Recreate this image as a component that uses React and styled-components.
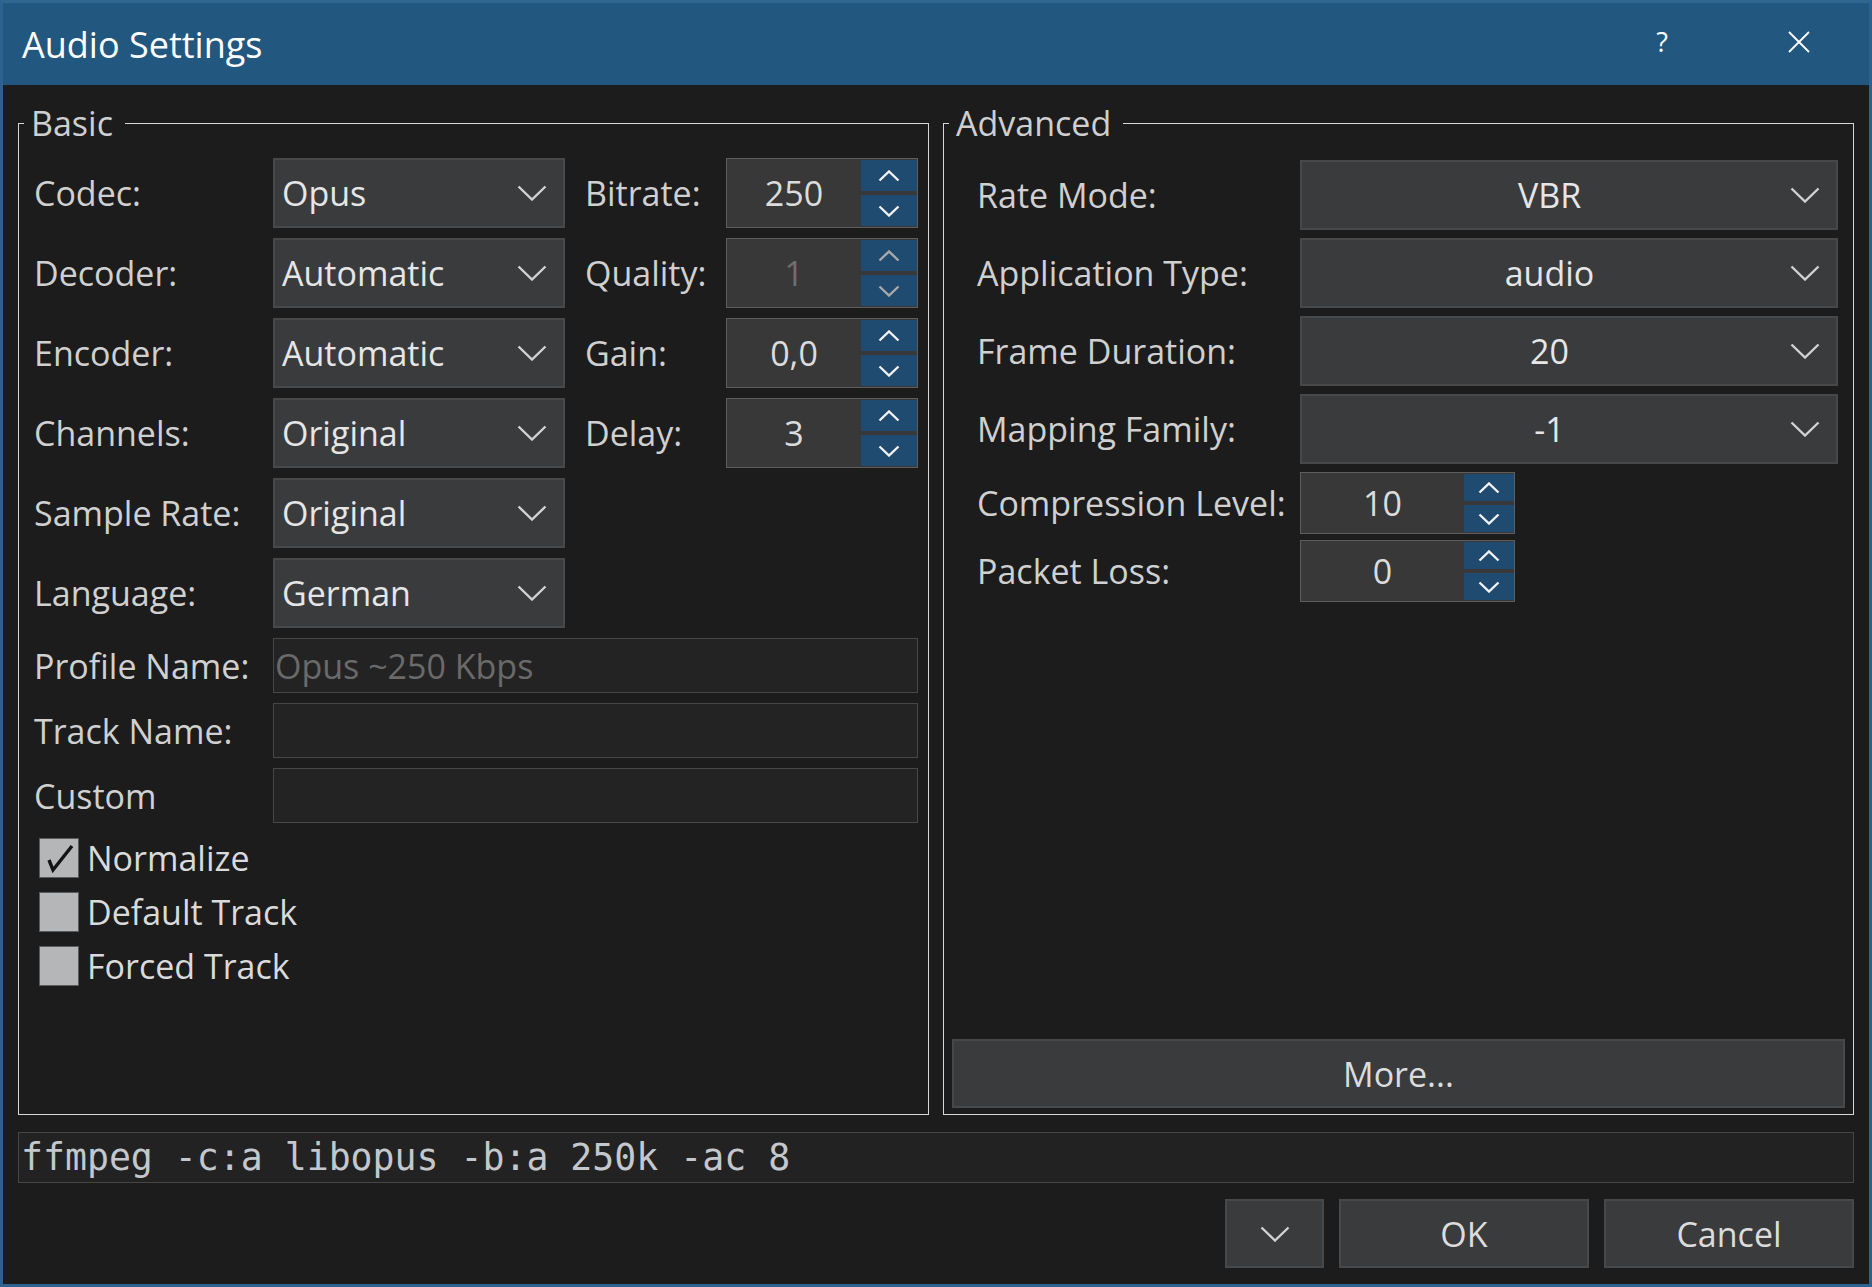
import React from "react";
import styled, { createGlobalStyle } from "styled-components";

const GlobalStyle = createGlobalStyle`
  html, body {
    margin: 0;
    padding: 0;
    background: #1c1c1c;
  }
  * {
    box-sizing: border-box;
  }
`;

const Chevron = ({ up, w = 30, h = 16, color = "#d2d2d2", sw = 2.4 }) => (
  <svg width={w} height={h} viewBox={`0 0 ${w} ${h}`}>
    <polyline
      points={
        up
          ? `1.5,${h - 1.5} ${w / 2},1.5 ${w - 1.5},${h - 1.5}`
          : `1.5,1.5 ${w / 2},${h - 1.5} ${w - 1.5},1.5`
      }
      fill="none"
      stroke={color}
      strokeWidth={sw}
    />
  </svg>
);

const Spin = ({ value, width, height, btnWidth, disabled }) => (
  <SpinBox $width={width} $height={height}>
    <SpinValue $disabled={disabled}>{value}</SpinValue>
    <SpinButtons $width={btnWidth}>
      <SpinButton>
        <Chevron up w={22} h={12} sw={2.4} color={disabled ? "#a9a9a9" : "#f2f2f2"} />
      </SpinButton>
      <SpinButton>
        <Chevron w={22} h={12} sw={2.4} color={disabled ? "#a9a9a9" : "#f2f2f2"} />
      </SpinButton>
    </SpinButtons>
  </SpinBox>
);

const Combo = ({ value, centered }) => (
  <ComboBox>
    <ComboValue $centered={centered}>{value}</ComboValue>
    <Chevron />
  </ComboBox>
);

const Check = ({ checked, label }) => (
  <CheckRow>
    <CheckBox>
      {checked && (
        <svg width="38" height="38" viewBox="0 0 38 38">
          <path d="M9 21 L13 31 L32 7" fill="none" stroke="#141414" strokeWidth="3.4" />
        </svg>
      )}
    </CheckBox>
    <CheckLabel>{label}</CheckLabel>
  </CheckRow>
);

const basicRows = [
  ["Codec:", "Opus", "Bitrate:", "250", false],
  ["Decoder:", "Automatic", "Quality:", "1", true],
  ["Encoder:", "Automatic", "Gain:", "0,0", false],
  ["Channels:", "Original", "Delay:", "3", false],
];

const advancedCombos = [
  ["Rate Mode:", "VBR"],
  ["Application Type:", "audio"],
  ["Frame Duration:", "20"],
  ["Mapping Family:", "-1"],
];

export default function App() {
  return (
    <Window>
      <GlobalStyle />
      <TitleBar>
        <Title>Audio Settings</Title>
        <TitleButtons>
          <TitleButton>?</TitleButton>
          <TitleButton>
            <svg width="22" height="22" viewBox="0 0 22 22">
              <path d="M1 1 L21 21 M21 1 L1 21" stroke="#fff" strokeWidth="1.8" />
            </svg>
          </TitleButton>
        </TitleButtons>
      </TitleBar>

      <Body>
        <Groups>
          <GroupBox>
            <Legend>Basic</Legend>
            <BasicContent>
              <BasicGrid>
                {basicRows.map(([label, combo, side, spin, dis]) => (
                  <React.Fragment key={label}>
                    <Label>{label}</Label>
                    <Combo value={combo} />
                    <SideLabel>{side}</SideLabel>
                    <Spin value={spin} width={192} height={70} btnWidth={56} disabled={dis} />
                  </React.Fragment>
                ))}
                <Label>Sample Rate:</Label>
                <Combo value="Original" />
                <Filler />
                <Label>Language:</Label>
                <Combo value="German" />
                <Filler />
                <Label>Profile Name:</Label>
                <TextField $placeholder>Opus ~250 Kbps</TextField>
                <Label>Track Name:</Label>
                <TextField />
                <Label>Custom</Label>
                <TextField />
              </BasicGrid>
              <CheckList>
                <Check checked label="Normalize" />
                <Check label="Default Track" />
                <Check label="Forced Track" />
              </CheckList>
            </BasicContent>
          </GroupBox>

          <GroupBox>
            <Legend>Advanced</Legend>
            <AdvancedContent>
              <AdvancedForm>
                {advancedCombos.map(([label, value]) => (
                  <AdvRow key={label}>
                    <AdvLabel>{label}</AdvLabel>
                    <Combo value={value} centered />
                  </AdvRow>
                ))}
                <SpinGroup>
                  <AdvRow>
                    <AdvLabel>Compression Level:</AdvLabel>
                    <Spin value="10" width={215} height={62} btnWidth={50} />
                  </AdvRow>
                  <AdvRow>
                    <AdvLabel>Packet Loss:</AdvLabel>
                    <Spin value="0" width={215} height={62} btnWidth={50} />
                  </AdvRow>
                </SpinGroup>
              </AdvancedForm>
              <MoreButton>More...</MoreButton>
            </AdvancedContent>
          </GroupBox>
        </Groups>

        <CommandLine>ffmpeg -c:a libopus -b:a 250k -ac 8</CommandLine>

        <ButtonRow>
          <DialogButton $width={99}>
            <Chevron />
          </DialogButton>
          <DialogButton $width={250}>OK</DialogButton>
          <DialogButton $width={250}>Cancel</DialogButton>
        </ButtonRow>
      </Body>
    </Window>
  );
}

const Window = styled.div`
  height: 100vh;
  display: flex;
  flex-direction: column;
  border: 3px solid #2c6190;
  border-top-color: #2f6790;
  background: #1c1c1c;
  font-family: "Open Sans", "Noto Sans", sans-serif;
  color: #d2d2d2;
  overflow: hidden;
`;

const TitleBar = styled.div`
  height: 82px;
  flex: none;
  display: flex;
  align-items: center;
  background: #22577f;
  padding-left: 19px;
`;

const Title = styled.div`
  flex: 1;
  font-size: 36px;
  color: #ffffff;
`;

const TitleButtons = styled.div`
  display: flex;
  gap: 67px;
  padding: 0 35px 5px 0;
`;

const TitleButton = styled.div`
  width: 70px;
  height: 77px;
  display: flex;
  align-items: center;
  justify-content: center;
  color: #ffffff;
  font-size: 27px;
`;

const Body = styled.div`
  flex: 1;
  display: flex;
  flex-direction: column;
  padding: 15px 15px 16px;
  min-height: 0;
`;

const Groups = styled.div`
  flex: 1;
  display: grid;
  grid-template-columns: 911px 911px;
  column-gap: 14px;
  min-height: 0;
`;

const GroupBox = styled.fieldset`
  margin: 0;
  padding: 0;
  min-width: 0;
  border: 1px solid #d6d6d6;
  display: flex;
  flex-direction: column;
`;

const Legend = styled.legend`
  font-size: 34px;
  line-height: 46px;
  color: #cfcfcf;
  margin-left: 5px;
  padding: 0 12px 0 7px;
`;

const BasicContent = styled.div`
  flex: 1;
  padding: 12px 10px 0 15px;
`;

const BasicGrid = styled.div`
  display: grid;
  grid-template-columns: 239px 292px 161px 192px;
  row-gap: 10px;
  align-items: center;
`;

const Label = styled.div`
  font-size: 34px;
  color: #d0d0d0;
  white-space: nowrap;
`;

const SideLabel = styled(Label)`
  padding-left: 20px;
`;

const Filler = styled.div`
  grid-column: 3 / 5;
`;

const ComboBox = styled.div`
  height: 70px;
  display: flex;
  align-items: center;
  background: #3a3b3d;
  border: 2px solid #47484a;
  padding: 0 16px 0 7px;
`;

const ComboValue = styled.div`
  flex: 1;
  font-size: 34px;
  color: #e6e6e6;
  text-align: ${(p) => (p.$centered ? "center" : "left")};
`;

const SpinBox = styled.div`
  width: ${(p) => p.$width}px;
  height: ${(p) => p.$height}px;
  display: flex;
  background: #383838;
  border: 1px solid #5e5e5e;
`;

const SpinValue = styled.div`
  flex: 1;
  display: flex;
  align-items: center;
  justify-content: center;
  font-size: 34px;
  color: ${(p) => (p.$disabled ? "#6e6e6e" : "#dcdcdc")};
`;

const SpinButtons = styled.div`
  width: ${(p) => p.$width}px;
  display: flex;
  flex-direction: column;
  gap: 4px;
  padding: 1px 0;
`;

const SpinButton = styled.div`
  flex: 1;
  display: flex;
  align-items: center;
  justify-content: center;
  background: #1f4b70;
`;

const TextField = styled.div`
  grid-column: 2 / 5;
  height: 55px;
  display: flex;
  align-items: center;
  background: #232323;
  border: 1px solid #474747;
  padding-left: 1px;
  font-size: 34px;
  color: ${(p) => (p.$placeholder ? "#6a6a6a" : "#dcdcdc")};
`;

const CheckList = styled.div`
  display: flex;
  flex-direction: column;
  gap: 14px;
  margin: 15px 0 0 5px;
`;

const CheckRow = styled.div`
  height: 40px;
  display: flex;
  align-items: center;
  gap: 8px;
`;

const CheckBox = styled.div`
  width: 40px;
  height: 40px;
  background: #b4b6b8;
  border: 1px solid #5a5b5c;
  display: flex;
  align-items: center;
  justify-content: center;
`;

const CheckLabel = styled.div`
  font-size: 34px;
  color: #dadada;
`;

const AdvancedContent = styled.div`
  flex: 1;
  display: flex;
  flex-direction: column;
  justify-content: space-between;
  padding: 14px 8px 6px 8px;
`;

const AdvancedForm = styled.div`
  display: flex;
  flex-direction: column;
  gap: 8px;
  padding-right: 7px;
`;

const SpinGroup = styled.div`
  display: flex;
  flex-direction: column;
  gap: 6px;
`;

const AdvRow = styled.div`
  display: grid;
  grid-template-columns: 348px 1fr;
  align-items: center;
`;

const AdvLabel = styled(Label)`
  padding-left: 25px;
`;

const MoreButton = styled.div`
  height: 69px;
  display: flex;
  align-items: center;
  justify-content: center;
  background: #3a3b3d;
  border: 2px solid #47484a;
  font-size: 34px;
  color: #dcdcdc;
`;

const CommandLine = styled.div`
  flex: none;
  height: 51px;
  margin-top: 17px;
  display: flex;
  align-items: center;
  padding-left: 2px;
  background: #222222;
  border: 1px solid #464646;
  font-family: "DejaVu Sans Mono", "Liberation Mono", monospace;
  font-size: 36.5px;
  color: #c4c8cc;
  white-space: pre;
`;

const ButtonRow = styled.div`
  flex: none;
  margin-top: 16px;
  display: flex;
  justify-content: flex-end;
  gap: 15px;
`;

const DialogButton = styled.div`
  width: ${(p) => p.$width}px;
  height: 69px;
  display: flex;
  align-items: center;
  justify-content: center;
  background: #3a3b3d;
  border: 2px solid #47484a;
  font-size: 34px;
  color: #dcdcdc;
`;
